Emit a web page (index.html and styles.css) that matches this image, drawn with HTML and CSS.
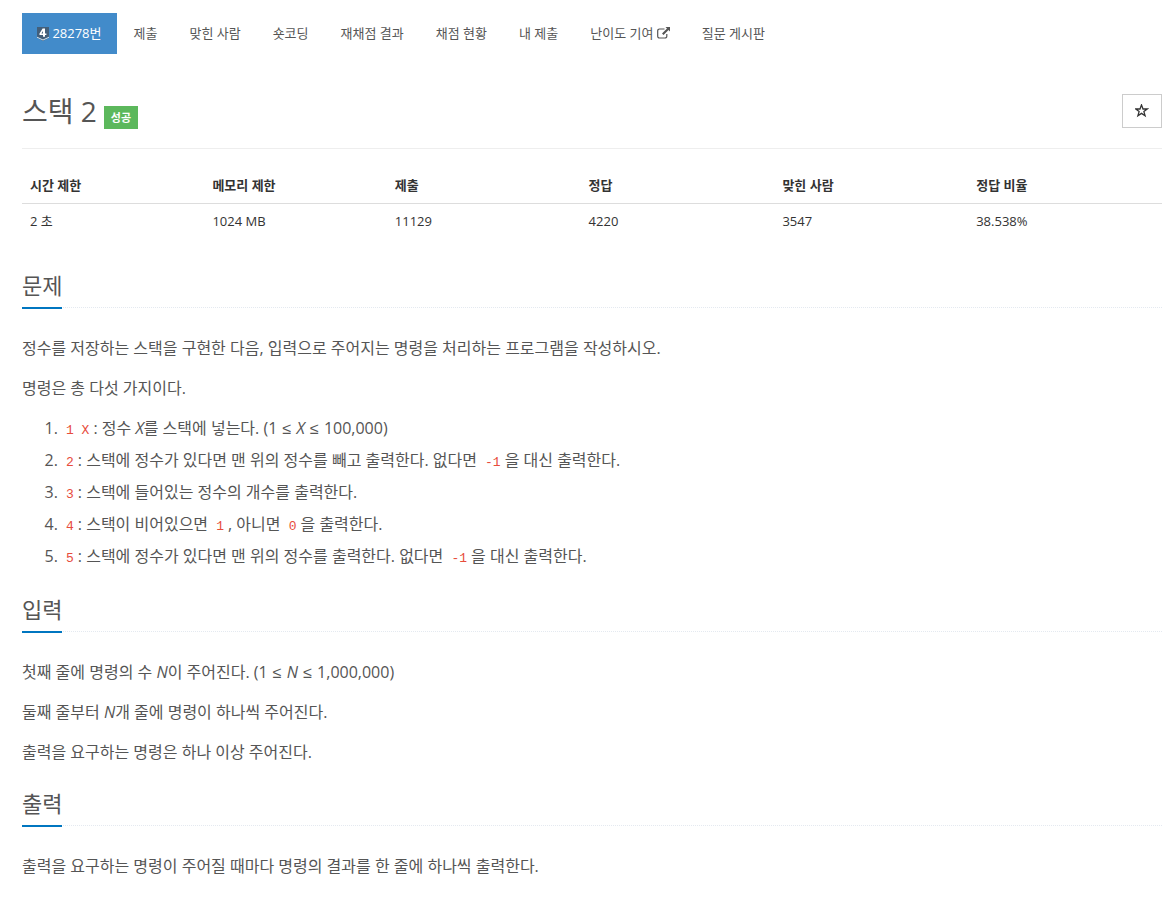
FILE: index.html
```html
<!DOCTYPE html>
<html lang="ko">
<head>
    <meta charset="UTF-8">
    <meta name="viewport" content="width=device-width, initial-scale=1.0">
    <link rel="stylesheet" href="styles.css">
    <title>28278번: 스택 2</title>
</head>
<body>
    <div class="container">
        <nav>
            <ul class="problem-menu">
                <li class="active">
                    <a href="#">
                        <svg class="tier" width="12" height="14" viewBox="0 0 12 14" aria-hidden="true">
                            <path d="M0 0h12v10.5L6 14 0 10.5z" fill="#435f7a"/>
                            <path d="M0 10.2L6 13l6-2.8" fill="none" stroke="#d5e3ee" stroke-width="1"/>
                            <path d="M5.6 1.5h2.4v4.9H9.4v1.6H8v1.7H6V8H2.5V6.4zM6 3.9L4.4 6.4H6z" fill="#fff" fill-rule="evenodd"/>
                        </svg>
                        28278번</a>
                </li>
                <li><a href="#">제출</a></li>
                <li><a href="#">맞힌 사람</a></li>
                <li><a href="#">숏코딩</a></li>
                <li><a href="#">재채점 결과</a></li>
                <li><a href="#">채점 현황</a></li>
                <li><a href="#">내 제출</a></li>
                <li>
                    <a href="#">난이도 기여
                        <svg class="external" width="13" height="12" viewBox="0 0 13 12" aria-hidden="true">
                            <path d="M7.5 2H2.5A1.8 1.8 0 0 0 .7 3.8v5.4A1.8 1.8 0 0 0 2.5 11H8a1.8 1.8 0 0 0 1.8-1.8V7" fill="none" stroke="#555" stroke-width="1.2"/>
                            <path d="M8.5 0H13v4.5l-1.5-1.5-5 5L5 6.5l5-5z" fill="#555"/>
                        </svg></a>
                </li>
                <li><a href="#">질문 게시판</a></li>
            </ul>
        </nav>

        <div class="page-header">
            <div class="title">
                <h1>스택 2</h1>
                <span class="label-success">성공</span>
            </div>
            <button type="button" class="btn-favorite" aria-label="즐겨찾기">
                <svg width="14" height="14" viewBox="0 0 14 14" aria-hidden="true">
                    <path d="M6.5 0.9L8 5h4.2L8.9 7.6l1.2 4.2L6.5 9.4l-3.6 2.4 1.2-4.2L0.8 5H5z" fill="none" stroke="#333" stroke-width="1.3"/>
                </svg>
            </button>
        </div>

        <table id="problem-info">
            <thead>
                <tr>
                    <th scope="col" class="limit">시간 제한</th>
                    <th scope="col" class="limit">메모리 제한</th>
                    <th scope="col">제출</th>
                    <th scope="col">정답</th>
                    <th scope="col">맞힌 사람</th>
                    <th scope="col">정답 비율</th>
                </tr>
            </thead>
            <tbody>
                <tr>
                    <td>2 초</td>
                    <td>1024 MB</td>
                    <td>11129</td>
                    <td>4220</td>
                    <td>3547</td>
                    <td>38.538%</td>
                </tr>
            </tbody>
        </table>

        <section id="description">
            <div class="headline"><h2>문제</h2></div>
            <p>정수를 저장하는 스택을 구현한 다음, 입력으로 주어지는 명령을 처리하는 프로그램을 작성하시오.</p>
            <p>명령은 총 다섯 가지이다.</p>
            <ol>
                <li><code>1 X</code>: 정수 <em>X</em>를 스택에 넣는다. (1 <span class="rel">≤</span> <em>X</em> <span class="rel">≤</span> 100,000)</li>
                <li><code>2</code>: 스택에 정수가 있다면 맨 위의 정수를 빼고 출력한다. 없다면 <code>-1</code>을 대신 출력한다.</li>
                <li><code>3</code>: 스택에 들어있는 정수의 개수를 출력한다.</li>
                <li><code>4</code>: 스택이 비어있으면 <code>1</code>, 아니면 <code>0</code>을 출력한다.</li>
                <li><code>5</code>: 스택에 정수가 있다면 맨 위의 정수를 출력한다. 없다면 <code>-1</code>을 대신 출력한다.</li>
            </ol>
        </section>

        <section id="input">
            <div class="headline"><h2>입력</h2></div>
            <p>첫째 줄에 명령의 수 <em>N</em>이 주어진다. (1 <span class="rel">≤</span> <em>N</em> <span class="rel">≤</span> 1,000,000)</p>
            <p>둘째 줄부터 <em>N</em>개 줄에 명령이 하나씩 주어진다.</p>
            <p>출력을 요구하는 명령은 하나 이상 주어진다.</p>
        </section>

        <section id="output">
            <div class="headline"><h2>출력</h2></div>
            <p>출력을 요구하는 명령이 주어질 때마다 명령의 결과를 한 줄에 하나씩 출력한다.</p>
        </section>
    </div>
</body>
</html>
```
FILE: styles.css
```css
* {
  box-sizing: border-box;
}

body {
  margin: 0;
  font-family: "Open Sans", "Noto Sans CJK KR", sans-serif;
  font-size: 13px;
  line-height: 21px;
  color: #333;
  background-color: #fff;
}

.container {
  padding: 13px 9px 20px 22px;
}

/* menu */
.problem-menu {
  display: flex;
  flex-wrap: wrap;
  gap: 2px;
  margin: 0;
  padding: 0;
  list-style: none;
}

.problem-menu a {
  display: block;
  height: 41px;
  padding: 10px 15px;
  color: #555;
  text-decoration: none;
}

.problem-menu .active a {
  color: #fff;
  background-color: #428bca;
}

.tier {
  vertical-align: -3px;
}

.external {
  vertical-align: -1px;
}

/* title */
.page-header {
  display: flex;
  justify-content: space-between;
  align-items: center;
  margin-top: 32px;
  padding-bottom: 12px;
  border-bottom: 1px solid #eee;
}

.title {
  display: flex;
  align-items: baseline;
  gap: 7px;
}

h1 {
  margin: 0;
  font-size: 28px;
  font-weight: normal;
  line-height: 50px;
  color: #555;
}

.label-success {
  padding: 2px 7px;
  font-size: 11px;
  line-height: 19px;
  font-weight: bold;
  color: #fff;
  background-color: #5cb85c;
}

.btn-favorite {
  display: flex;
  justify-content: center;
  align-items: center;
  width: 40px;
  height: 34px;
  padding: 0;
  border: 1px solid #ccc;
  background-color: #fff;
  cursor: pointer;
}

/* info table */
table {
  width: 100%;
  margin-top: 19px;
  table-layout: fixed;
  border-collapse: collapse;
}

th, td {
  height: 35px;
  padding: 1px 8px 0;
  text-align: left;
}

th {
  border-bottom: 1px solid #ddd;
}

.limit {
  width: 16%;
}

/* sections */
.headline {
  margin: 21px 0 25px;
  border-bottom: 1px dotted #e4e9f0;
}

#description .headline {
  margin-top: 32px;
}

h2 {
  width: fit-content;
  margin: 0 0 -2px;
  padding-bottom: 7px;
  border-bottom: 2px solid #0076c0;
  font-size: 22px;
  font-weight: normal;
  line-height: 30px;
  color: #555;
}

p {
  margin: 0 0 10px;
  font-size: 16px;
  line-height: 30px;
  color: #555;
}

ol {
  margin: 0 0 10px;
  padding: 0 0 2px 40px;
  font-size: 16px;
  line-height: 30px;
  color: #555;
}

ol li + li {
  margin-top: 2px;
}

code {
  padding: 2px 4px;
  font-family: "Liberation Mono", monospace;
  font-size: 13px;
  line-height: 20px;
  color: #e74c3c;
}

.rel {
  margin: 0 1px;
  font-family: "Liberation Sans", sans-serif;
  line-height: 20px;
}
```
